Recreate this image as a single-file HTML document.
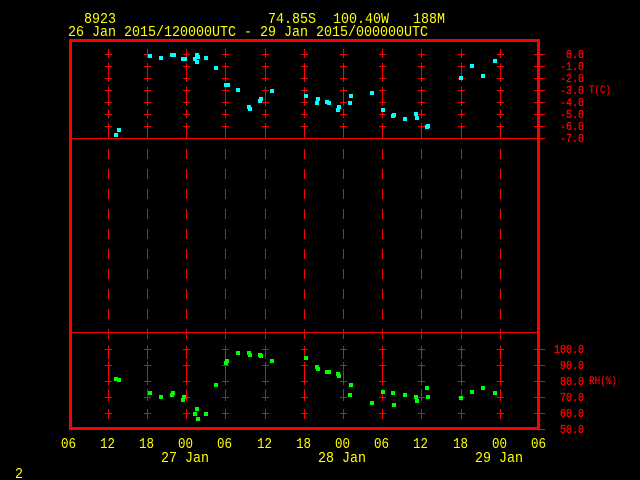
<!DOCTYPE html>
<html><head><meta charset="utf-8"><style>
html,body{margin:0;padding:0;background:#000;width:640px;height:480px;overflow:hidden}
svg{display:block}
text{font-family:"Liberation Mono",monospace}
.y{fill:#ff0;font-size:15px}
.r{fill:#f00;font-size:12px;stroke:#f00;stroke-width:.3px}
.s{fill:#f00;font-size:11px;stroke:#f00;stroke-width:.2px}
</style></head><body>
<svg width="640" height="480" viewBox="0 0 640 480" xmlns="http://www.w3.org/2000/svg">
<defs>
<path id="c" fill="none" stroke="#f00" stroke-width="1" shape-rendering="crispEdges" d="M.5 49V58M.5 63V82M.5 87V106M.5 109V118M.5 123V138M.5 149V159M.5 169V179M.5 189V199M.5 209V219M.5 229V239M.5 249V259M.5 269V279M.5 289V299M.5 309V319M.5 329V339M.5 346V359M.5 362V385M.5 389V401M.5 409V419M-3 54.5H4M-3 66.5H4M-3 78.5H4M-3 90.5H4M-3 102.5H4M-3 114.5H4M-3 126.5H4M-3 349.5H4M-3 365.5H4M-3 381.5H4M-3 397.5H4M-3 413.5H4"/>
</defs>
<use href="#c" x="108"/><use href="#c" x="147"/><use href="#c" x="186"/><use href="#c" x="225"/><use href="#c" x="265"/><use href="#c" x="304"/><use href="#c" x="343"/><use href="#c" x="382"/><use href="#c" x="421"/><use href="#c" x="461"/><use href="#c" x="500"/>
<g fill="#f00" shape-rendering="crispEdges">
<rect x="69" y="39" width="471" height="3"/>
<rect x="69" y="427" width="471" height="3"/>
<rect x="69" y="39" width="3" height="391"/>
<rect x="537" y="39" width="3" height="391"/>
<rect x="72" y="138" width="465" height="1"/>
<rect x="72" y="332" width="465" height="1"/>
</g>
<path fill="none" stroke="#f00" shape-rendering="crispEdges" d="M534 54.5H545M534 66.5H545M534 78.5H545M534 90.5H545M534 102.5H545M534 114.5H545M534 126.5H545M534 138.5H545M534 349.5H545M534 365.5H545M534 381.5H545M534 397.5H545M534 413.5H545M534 429.5H545"/>
<g fill="#0ff" shape-rendering="crispEdges">
<rect x="114" y="133" width="4" height="4"/><rect x="117" y="128" width="4" height="4"/>
<rect x="148" y="54" width="4" height="4"/><rect x="159" y="56" width="4" height="4"/><rect x="170" y="53" width="6" height="4"/>
<rect x="181" y="57" width="6" height="4"/><rect x="193" y="57" width="4" height="4"/><rect x="195" y="53" width="4" height="4"/><rect x="196" y="55" width="4" height="4"/><rect x="195" y="60" width="4" height="4"/><rect x="204" y="56" width="4" height="4"/><rect x="214" y="66" width="4" height="4"/>
<rect x="224" y="83" width="6" height="4"/><rect x="236" y="88" width="4" height="4"/><rect x="247" y="105" width="4" height="4"/><rect x="248" y="107" width="4" height="4"/><rect x="258" y="99" width="4" height="4"/><rect x="259" y="97" width="4" height="4"/><rect x="270" y="89" width="4" height="4"/>
<rect x="304" y="94" width="4" height="4"/><rect x="315" y="101" width="4" height="4"/><rect x="316" y="97" width="4" height="4"/>
<rect x="325" y="100" width="4" height="4"/><rect x="327" y="101" width="4" height="4"/><rect x="336" y="108" width="4" height="4"/><rect x="337" y="105" width="4" height="4"/><rect x="348" y="101" width="4" height="4"/><rect x="349" y="94" width="4" height="4"/>
<rect x="370" y="91" width="4" height="4"/><rect x="381" y="108" width="4" height="4"/><rect x="391" y="114" width="4" height="4"/><rect x="392" y="113" width="4" height="4"/><rect x="403" y="117" width="4" height="4"/><rect x="414" y="112" width="4" height="4"/><rect x="415" y="116" width="4" height="4"/><rect x="425" y="125" width="4" height="4"/><rect x="426" y="124" width="4" height="4"/>
<rect x="459" y="76" width="4" height="4"/><rect x="470" y="64" width="4" height="4"/><rect x="481" y="74" width="4" height="4"/><rect x="493" y="59" width="4" height="4"/>
</g>
<g fill="#0f0" shape-rendering="crispEdges">
<rect x="114" y="377" width="4" height="4"/><rect x="117" y="378" width="4" height="4"/>
<rect x="148" y="391" width="4" height="4"/><rect x="159" y="395" width="4" height="4"/><rect x="170" y="393" width="4" height="4"/><rect x="171" y="391" width="4" height="4"/>
<rect x="181" y="398" width="4" height="4"/><rect x="182" y="395" width="4" height="4"/><rect x="193" y="412" width="4" height="4"/><rect x="195" y="407" width="4" height="4"/><rect x="196" y="417" width="4" height="4"/><rect x="204" y="412" width="4" height="4"/><rect x="214" y="383" width="4" height="4"/>
<rect x="224" y="361" width="4" height="4"/><rect x="225" y="359" width="4" height="4"/><rect x="236" y="351" width="4" height="4"/><rect x="247" y="351" width="4" height="4"/><rect x="248" y="353" width="4" height="4"/><rect x="258" y="353" width="4" height="4"/><rect x="259" y="354" width="4" height="4"/><rect x="270" y="359" width="4" height="4"/>
<rect x="304" y="356" width="4" height="4"/><rect x="315" y="365" width="4" height="4"/><rect x="316" y="367" width="4" height="4"/>
<rect x="325" y="370" width="6" height="4"/><rect x="336" y="372" width="4" height="4"/><rect x="337" y="374" width="4" height="4"/><rect x="348" y="393" width="4" height="4"/><rect x="349" y="383" width="4" height="4"/>
<rect x="370" y="401" width="4" height="4"/><rect x="381" y="390" width="4" height="4"/><rect x="391" y="391" width="4" height="4"/><rect x="392" y="403" width="4" height="4"/><rect x="403" y="393" width="4" height="4"/><rect x="414" y="395" width="4" height="4"/><rect x="415" y="399" width="4" height="4"/><rect x="425" y="386" width="4" height="4"/><rect x="426" y="395" width="4" height="4"/>
<rect x="459" y="396" width="4" height="4"/><rect x="470" y="390" width="4" height="4"/><rect x="481" y="386" width="4" height="4"/><rect x="493" y="391" width="4" height="4"/>
</g>
<g class="y">
<text x="84" y="23" textLength="32" lengthAdjust="spacingAndGlyphs">8923</text>
<text x="268" y="23" textLength="48" lengthAdjust="spacingAndGlyphs">74.85S</text>
<text x="333" y="23" textLength="56" lengthAdjust="spacingAndGlyphs">100.40W</text>
<text x="413" y="23" textLength="32" lengthAdjust="spacingAndGlyphs">188M</text>
<text x="68" y="36" textLength="360" lengthAdjust="spacingAndGlyphs">26 Jan 2015/120000UTC - 29 Jan 2015/000000UTC</text>
<text x="61" y="448" textLength="15" lengthAdjust="spacingAndGlyphs">06</text>
<text x="100" y="448" textLength="15" lengthAdjust="spacingAndGlyphs">12</text>
<text x="139" y="448" textLength="15" lengthAdjust="spacingAndGlyphs">18</text>
<text x="178" y="448" textLength="15" lengthAdjust="spacingAndGlyphs">00</text>
<text x="217" y="448" textLength="15" lengthAdjust="spacingAndGlyphs">06</text>
<text x="257" y="448" textLength="15" lengthAdjust="spacingAndGlyphs">12</text>
<text x="296" y="448" textLength="15" lengthAdjust="spacingAndGlyphs">18</text>
<text x="335" y="448" textLength="15" lengthAdjust="spacingAndGlyphs">00</text>
<text x="374" y="448" textLength="15" lengthAdjust="spacingAndGlyphs">06</text>
<text x="413" y="448" textLength="15" lengthAdjust="spacingAndGlyphs">12</text>
<text x="453" y="448" textLength="15" lengthAdjust="spacingAndGlyphs">18</text>
<text x="492" y="448" textLength="15" lengthAdjust="spacingAndGlyphs">00</text>
<text x="531" y="448" textLength="15" lengthAdjust="spacingAndGlyphs">06</text>
<text x="161" y="462" textLength="48" lengthAdjust="spacingAndGlyphs">27 Jan</text>
<text x="318" y="462" textLength="48" lengthAdjust="spacingAndGlyphs">28 Jan</text>
<text x="475" y="462" textLength="48" lengthAdjust="spacingAndGlyphs">29 Jan</text>
<text x="15" y="478" textLength="8" lengthAdjust="spacingAndGlyphs">2</text>
</g>
<g class="r">
<text x="566" y="58" textLength="18" lengthAdjust="spacingAndGlyphs">0.0</text>
<text x="560" y="70" textLength="24" lengthAdjust="spacingAndGlyphs">-1.0</text>
<text x="560" y="82" textLength="24" lengthAdjust="spacingAndGlyphs">-2.0</text>
<text x="560" y="94" textLength="24" lengthAdjust="spacingAndGlyphs">-3.0</text>
<text x="560" y="106" textLength="24" lengthAdjust="spacingAndGlyphs">-4.0</text>
<text x="560" y="118" textLength="24" lengthAdjust="spacingAndGlyphs">-5.0</text>
<text x="560" y="130" textLength="24" lengthAdjust="spacingAndGlyphs">-6.0</text>
<text x="560" y="142" textLength="24" lengthAdjust="spacingAndGlyphs">-7.0</text>
<text x="554" y="353" textLength="30" lengthAdjust="spacingAndGlyphs">100.0</text>
<text x="560" y="369" textLength="24" lengthAdjust="spacingAndGlyphs">90.0</text>
<text x="560" y="385" textLength="24" lengthAdjust="spacingAndGlyphs">80.0</text>
<text x="560" y="401" textLength="24" lengthAdjust="spacingAndGlyphs">70.0</text>
<text x="560" y="417" textLength="24" lengthAdjust="spacingAndGlyphs">60.0</text>
<text x="560" y="433" textLength="24" lengthAdjust="spacingAndGlyphs">50.0</text>
</g>
<g class="s">
<text x="589" y="93" textLength="22" lengthAdjust="spacingAndGlyphs">T(C)</text>
<text x="589" y="384" textLength="28" lengthAdjust="spacingAndGlyphs">RH(%)</text>
</g>
</svg>
</body></html>
